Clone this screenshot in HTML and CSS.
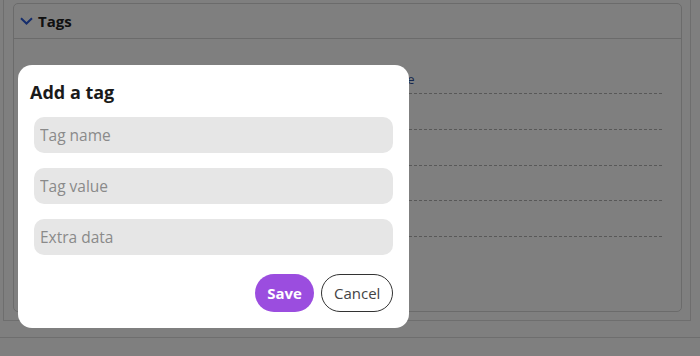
FILE: index.html
```html
<!DOCTYPE html>
<html>
<head>
    <title>Tags</title>
    <link rel="stylesheet" href="styles.css">
</head>
<body>
  <div class="outer">
    <div class="panel">
      <div class="panel-head">
        <svg class="chevron" width="13" height="8" viewBox="0 0 13 8"><path d="M1 1.2 L6.5 6.5 L12 1.2" fill="none" stroke="currentColor" stroke-width="2"/></svg>
        <span>Tags</span>
      </div>
      <div class="panel-body">
        <div class="tag-table">
          <div class="row head"><span></span><span class="link">Value</span></div>
          <div class="row"></div>
          <div class="row"></div>
          <div class="row"></div>
          <div class="row"></div>
        </div>
      </div>
    </div>
  </div>
  <div class="footer"></div>

  <div class="overlay">
    <div class="modal">
      <h3>Add a tag</h3>
      <form class="tag-form">
        <input type="text" placeholder="Tag name">
        <input type="text" placeholder="Tag value">
        <input type="text" placeholder="Extra data">
        <div class="actions">
          <button type="button" class="btn save">Save</button>
          <button type="button" class="btn cancel">Cancel</button>
        </div>
      </form>
    </div>
  </div>
</body>
</html>
```

FILE: styles.css
```css
* {
    box-sizing: border-box;
}

body {
    margin: 0;
    background: #ffffff;
    font-family: "Open Sans", "Noto Sans", sans-serif;
    color: #202020;
}

.outer {
    margin-left: 3px;
    width: 688px;
    padding: 3px 8px 8px 9px;
    border-left: 1px solid #dcdcdc;
    border-right: 1px solid #dcdcdc;
    border-bottom: 1px solid #dcdcdc;
}

.panel {
    border: 1px solid #d6d6d6;
    border-radius: 5px;
    height: 309px;
}

.panel-head {
    height: 35px;
    display: flex;
    align-items: center;
    padding-left: 6px;
    border-bottom: 1px solid #d6d6d6;
    font-weight: 700;
    font-size: 15px;
}

.chevron {
    color: #2a5ad8;
    margin-right: 5px;
}

.panel-body {
    padding: 19px 19px 0 20px;
}

.tag-table .row {
    height: 35.75px;
    display: grid;
    grid-template-columns: 347px 1fr;
    border-bottom: 1px dashed #b0b0b0;
    font-size: 13px;
    align-items: center;
}

.tag-table .row.head {
    height: 36px;
    padding-top: 6px;
}

.link {
    color: #2f4f9a;
}

.footer {
    margin-top: 16px;
    border-top: 1px solid #dcdcdc;
    height: 20px;
}

.overlay {
    position: fixed;
    inset: 0;
    background: rgba(0, 0, 0, 0.5);
}

.modal {
    position: absolute;
    left: 18px;
    top: 65px;
    width: 391px;
    height: 263px;
    background: #ffffff;
    border-radius: 14px;
    padding: 14px 16px 16px 16px;
}

.modal h3 {
    margin: 0 0 12px -4px;
    font-size: 18px;
    font-weight: 700;
    color: #1a1a1a;
    line-height: 26px;
}

.tag-form {
    display: flex;
    flex-direction: column;
    gap: 15px;
}

.tag-form input {
    height: 36px;
    border: none;
    border-radius: 10px;
    background: #e6e6e6;
    padding: 0 6px;
    font-family: inherit;
    font-size: 15.5px;
    outline: none;
}

.tag-form input::placeholder {
    color: #8a8a8a;
}

.actions {
    display: flex;
    justify-content: flex-end;
    gap: 7px;
    margin-top: 4px;
}

.btn {
    height: 38px;
    border-radius: 19px;
    font-family: inherit;
    font-size: 15px;
    padding: 0 12px;
}

.save {
    background: #9b4ddf;
    border: none;
    color: #ffffff;
    font-weight: 700;
    width: 59px;
}

.cancel {
    background: #ffffff;
    border: 1px solid #333333;
    color: #444444;
    width: 72px;
}
```
